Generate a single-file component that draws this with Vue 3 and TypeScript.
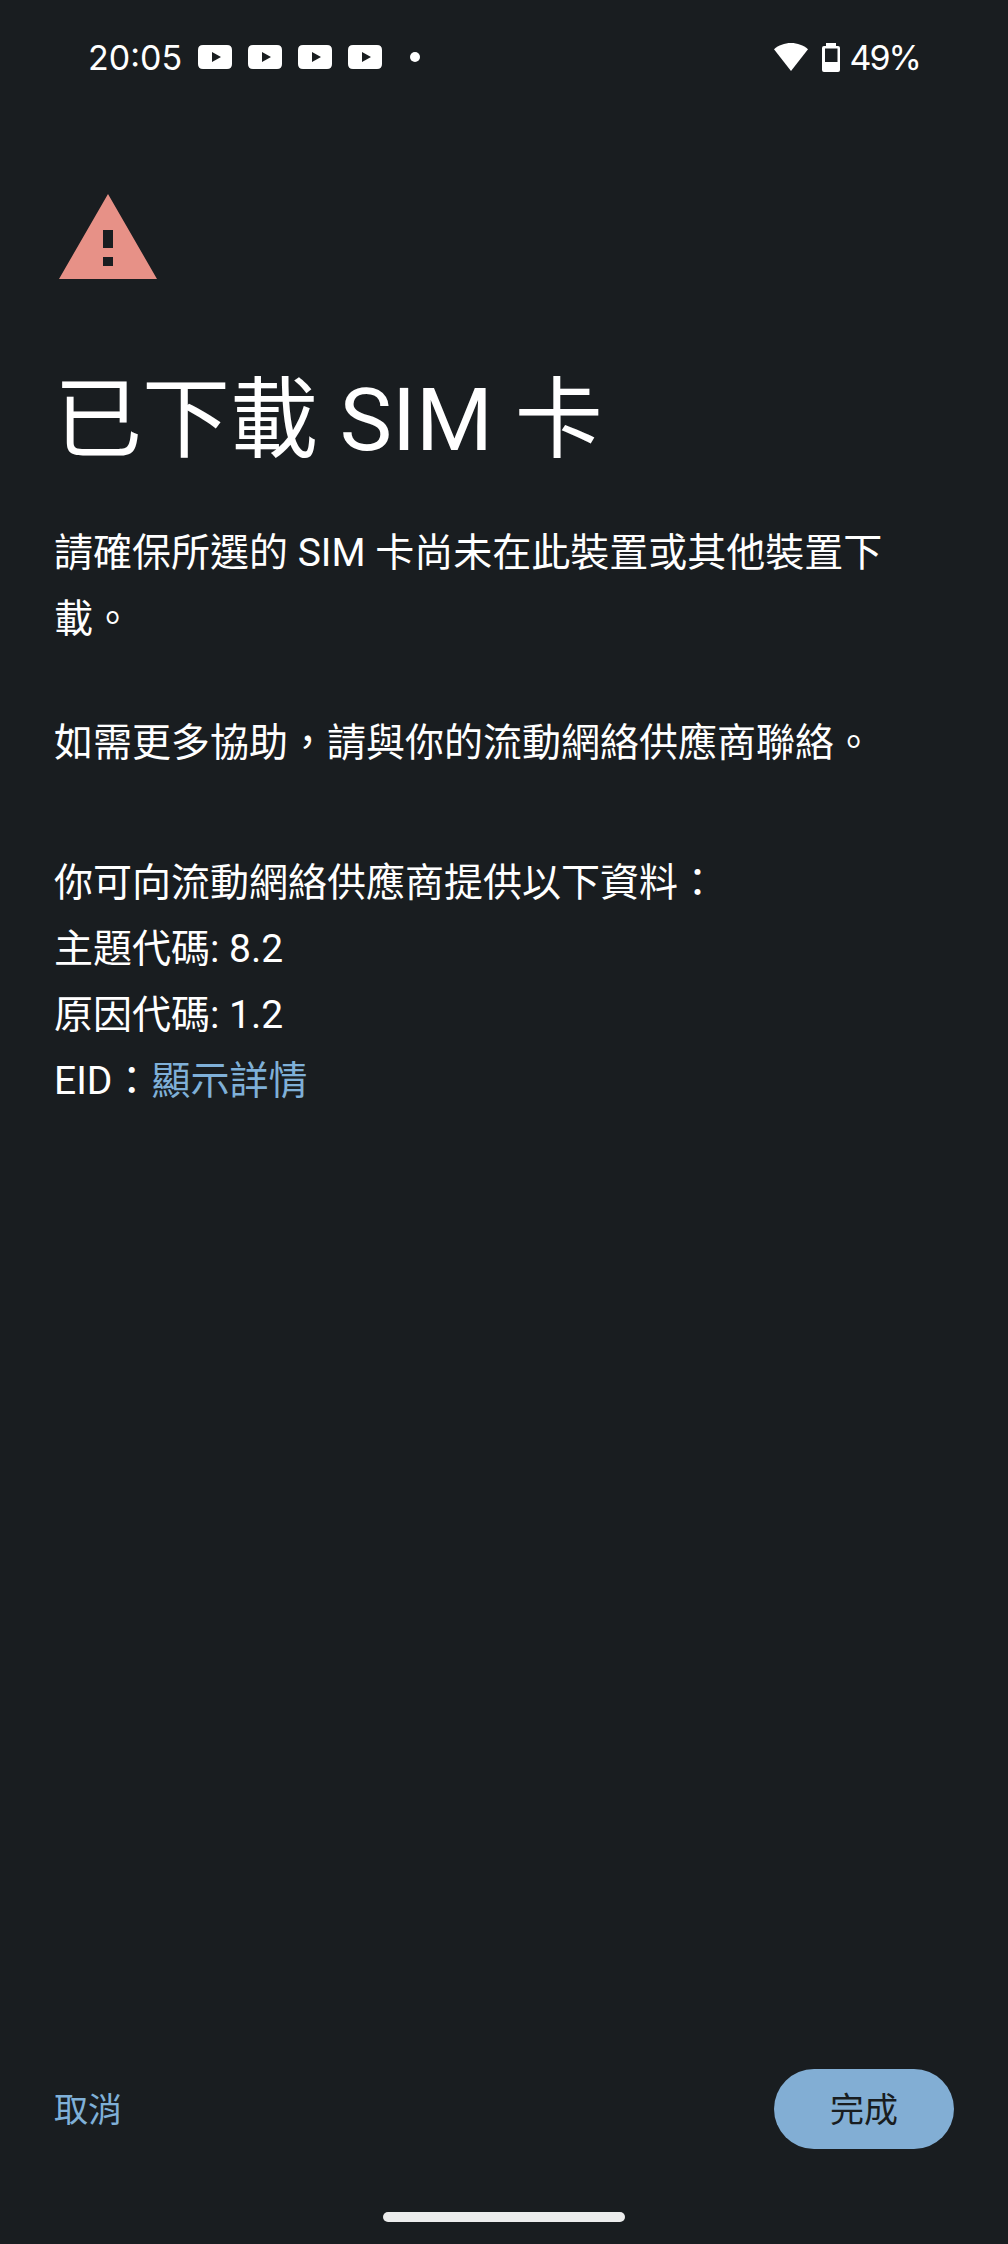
<script setup lang="ts">
const blocks: string[] = ['主題代碼: 8.2', '原因代碼: 1.2']
const apps: number[] = [1, 2, 3, 4]
</script>

<template>
  <div class="screen">
    <div class="status-bar">
      <div class="status-left">
        <span class="clock">20:05</span>
        <svg v-for="n in apps" :key="n" class="yt" viewBox="0 0 34 24">
          <path fill-rule="evenodd" fill="#fff" d="M5 0H29Q34 0 34 5V19Q34 24 29 24H5Q0 24 0 19V5Q0 0 5 0ZM14 7V17L23 12Z" />
        </svg>
        <span class="dot"></span>
      </div>
      <div class="status-right">
        <svg class="wifi" viewBox="0 0 34 28">
          <path fill="#fff" d="M17 0C23.5 0 29.5 2.3 34 6.2L17 28L0 6.2C4.5 2.3 10.5 0 17 0Z" />
        </svg>
        <svg class="battery" viewBox="0 0 18 29">
          <path fill-rule="evenodd" fill="#fff" d="M4 0H14V3H16Q18 3 18 5V27Q18 29 16 29H2Q0 29 0 27V5Q0 3 2 3H4ZM3 5.5V19H15.5V5.5Z" />
        </svg>
        <span class="pct">49%</span>
      </div>
    </div>

    <main class="content">
      <svg class="warn" viewBox="0 0 98 85">
        <path fill-rule="evenodd" fill="#e79187" d="M49 0L98 85H0ZM44 36V54H54V36ZM44 63V72H54V63Z" />
      </svg>
      <h1 class="title">已下載 SIM 卡</h1>
      <p class="para">請確保所選的 SIM 卡尚未在此裝置或其他裝置下載。</p>
      <p class="para second">如需更多協助，請與你的流動網絡供應商聯絡。</p>
      <div class="para details">
        <div>你可向流動網絡供應商提供以下資料：</div>
        <div v-for="line in blocks" :key="line">{{ line }}</div>
        <div>EID：<a class="link">顯示詳情</a></div>
      </div>
    </main>

    <footer class="actions">
      <a class="cancel">取消</a>
      <button class="done">完成</button>
    </footer>
    <div class="nav-area"><span class="handle"></span></div>
  </div>
</template>

<style>
body {
  background: #191d20;
}
</style>

<style scoped>
.screen {
  width: 1008px;
  height: 2244px;
  display: flex;
  flex-direction: column;
  background: #191d20;
  color: #fff;
  font-family: Roboto, "Noto Sans CJK TC", sans-serif;
  overflow: hidden;
}

.status-bar {
  height: 114px;
  flex: none;
  display: flex;
  justify-content: space-between;
  align-items: center;
  padding: 0 88px;
  font-family: Inter, sans-serif;
}

.status-left,
.status-right {
  display: flex;
  align-items: center;
}

.clock {
  font-size: 34px;
  margin-right: 16px;
}

.yt {
  width: 34px;
  height: 24px;
  margin-right: 16px;
}

.dot {
  width: 10px;
  height: 10px;
  border-radius: 50%;
  background: #fff;
  margin-left: 12px;
}

.wifi {
  width: 34px;
  height: 28px;
  margin-right: 14px;
}

.battery {
  width: 18px;
  height: 29px;
  margin-right: 10px;
}

.pct {
  font-size: 34px;
  letter-spacing: -2px;
}

.content {
  flex: 1;
  padding: 80px 56px 0 54px;
}

.warn {
  display: block;
  width: 98px;
  height: 85px;
  margin: 0 0 91px 5px;
}

.title {
  margin: 0 0 50px;
  font-size: 88px;
  font-weight: 400;
  line-height: 100px;
}

.para {
  margin: 0 0 58px;
  font-size: 39px;
  line-height: 66px;
  color: #fff;
}

.second {
  margin-bottom: 74px;
}

.link {
  color: #7fb0d8;
}

.actions {
  flex: none;
  display: flex;
  justify-content: space-between;
  align-items: center;
  padding: 0 54px;
}

.cancel {
  color: #7fb0d8;
  font-size: 34px;
  padding-bottom: 4px;
}

.done {
  width: 180px;
  height: 80px;
  padding: 0 0 4px;
  border: 0;
  border-radius: 40px;
  background: #82aed4;
  color: #191d20;
  font: inherit;
  font-size: 34px;
}

.nav-area {
  flex: none;
  height: 95px;
  display: flex;
  justify-content: center;
  padding-top: 63px;
  box-sizing: border-box;
}

.handle {
  width: 242px;
  height: 10px;
  border-radius: 5px;
  background: #eceded;
}
</style>
